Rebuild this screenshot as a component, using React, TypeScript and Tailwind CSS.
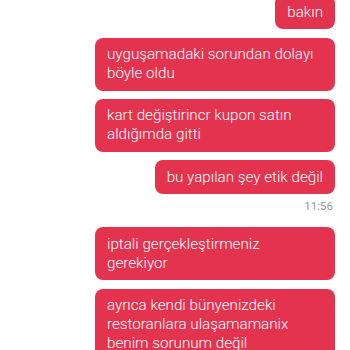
import React from "react";

const font = { fontFamily: "Roboto, 'Noto Sans', sans-serif" };

function Bubble({ text, className = "" }: { text: string; className?: string }) {
  return (
    <div
      className={`max-w-[240px] rounded-[8px] bg-[#e3334f] px-[12px] py-[7.5px] text-[15.2px] font-light leading-[19px] text-white ${className}`}
    >
      {text}
    </div>
  );
}

export default function App() {
  return (
    <div className="h-[350px] w-[350px] overflow-hidden bg-white" style={font}>
      <div className="-mt-[5px] flex flex-col items-end pr-[15px]">
        <Bubble text="bakın" />
        <Bubble className="mt-[8.5px]" text="uyguşamadaki sorundan dolayı böyle oldu" />
        <Bubble className="mt-[8px]" text="kart değiştirincr kupon satın aldığımda gitti" />
        <Bubble className="mt-[8.5px]" text="bu yapılan şey etik değil" />
        <div className="mt-[5px] pr-[2px] text-[11.5px] leading-[14px] text-[#9a9aa0]">11:56</div>
        <Bubble className="mt-[14px]" text="iptali gerçekleştirmeniz gerekiyor" />
        <Bubble className="mt-[8.5px]" text="ayrıca kendi bünyenizdeki restoranlara ulaşamamanix benim sorunum değil" />
      </div>
    </div>
  );
}
